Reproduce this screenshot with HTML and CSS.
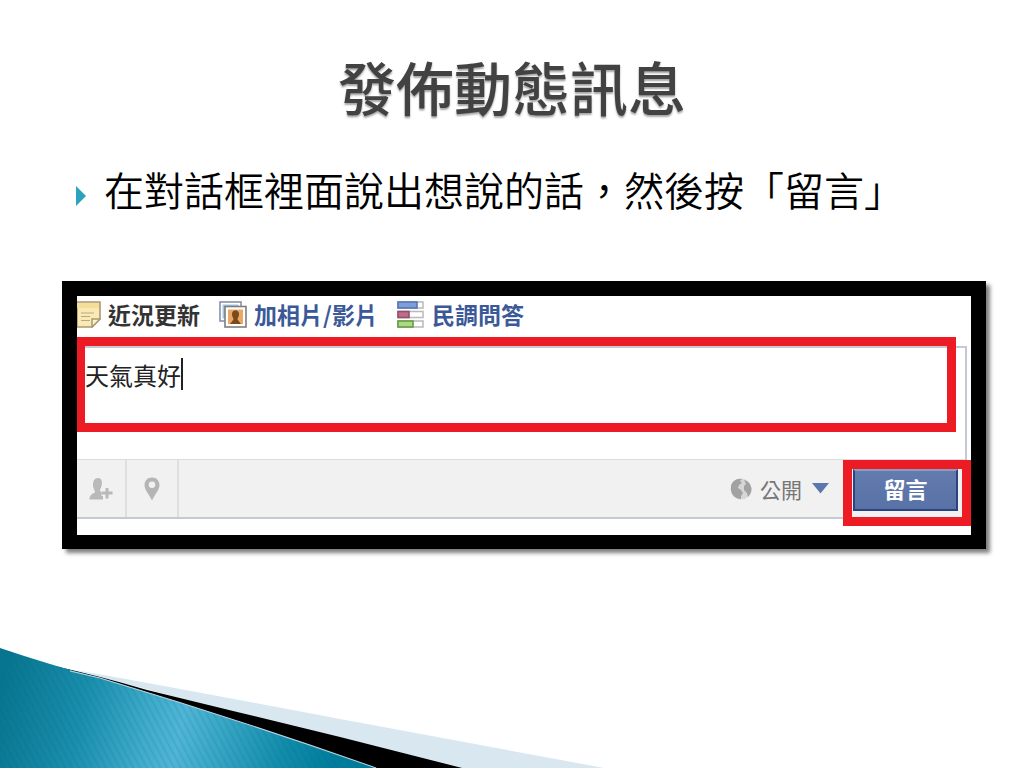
FILE: index.html
```html
<!DOCTYPE html>
<html lang="zh-Hant">
<head>
<meta charset="utf-8">
<meta name="viewport" content="width=device-width, initial-scale=1">
<title>發佈動態訊息</title>
<link rel="stylesheet" href="styles.css">
</head>
<body>
<main class="slide">
  <h1 class="title">發佈動態訊息</h1>
  <ul class="points">
    <li class="point">
      <svg class="marker" viewBox="0 0 10 20" aria-hidden="true"><path d="M0 0L10 10L0 20Z" fill="#2da2bf"/></svg>
      <span>在對話框裡面說出想說的話，然後按「留言」</span>
    </li>
  </ul>

  <section class="panel">
    <nav class="tabs">
      <a class="tab current" href="#status">
        <svg class="tab-icon note" viewBox="0 0 24 27" aria-hidden="true">
          <path d="M0 1H23V18L15 26H0Z" fill="#fbe9b4" stroke="#a89a72" stroke-width="1.6"/>
          <path d="M0 2H22V7H0Z" fill="#f7dd9c"/>
          <path d="M15 26V18H23Z" fill="#fff3c8" stroke="#a89a72" stroke-width="1.5"/>
          <path d="M4 12H17M4 15.500H13M4 19.500H13" stroke="#b5a98a" stroke-width="1.200"/>
        </svg>
        <span>近況更新</span>
      </a>
      <a class="tab" href="#photo">
        <svg class="tab-icon" viewBox="0 0 28 27" aria-hidden="true">
          <rect x="1" y="1" width="21" height="19" fill="#fff" stroke="#8492ac" stroke-width="1.6"/>
          <rect x="3.500" y="3.500" width="16" height="14" fill="#a9c4e8"/>
          <rect x="6" y="5.500" width="21" height="20.500" fill="#fff" stroke="#7d7d7d" stroke-width="1.6"/>
          <rect x="9" y="8.500" width="15" height="14.500" fill="#e9a867"/>
          <path d="M13 13C13 8 20 8 20 13C20 16 18.500 17 18.500 18.500L22 23H11L14.500 18.500C14.500 17 13 16 13 13Z" fill="#7a4a1c"/>
        </svg>
        <span>加相片/影片</span>
      </a>
      <a class="tab" href="#poll">
        <svg class="tab-icon" viewBox="0 0 28 27" aria-hidden="true">
          <g fill="#fff" stroke="#b9b9b9" stroke-width="1.5">
            <rect x="1" y="1" width="25" height="6"/><rect x="1" y="10.500" width="25" height="6"/><rect x="1" y="20" width="25" height="6"/>
          </g>
          <rect x="1" y="1" width="19" height="6" fill="#7c9fdb" stroke="#5a76b4" stroke-width="1.6"/>
          <rect x="1" y="10.500" width="11" height="6" fill="#c06a8c" stroke="#93506a" stroke-width="1.6"/>
          <rect x="1" y="20" width="15" height="6" fill="#a8dc7c" stroke="#669c48" stroke-width="1.6"/>
        </svg>
        <span>民調問答</span>
      </a>
    </nav>

    <form class="composer">
      <div class="message">
        <textarea class="message-text" rows="1" aria-label="近況內容">天氣真好</textarea>
        <span class="caret"></span>
      </div>
      <div class="toolbar">
        <button class="tool tag" type="button" aria-label="標註朋友">
          <svg width="24" height="24" viewBox="0 0 24 24" aria-hidden="true"><path d="M9 1C13 1 13.500 5 12.500 9C12 11 11 12 11 14L14 16V22.500H0.500C0.500 18 3 17 6 15.500C6 13 4 12 4 8C4 4 5.500 1 9 1Z" fill="#b9b9b9"/><path d="M18 10V22M12.500 16H24" stroke="#f1f1f1" stroke-width="6"/><path d="M18 11V21.500M12.500 16H23.500" stroke="#b9b9b9" stroke-width="3"/></svg>
        </button>
        <button class="tool place" type="button" aria-label="新增地點">
          <svg width="16" height="24" viewBox="0 0 16 24" aria-hidden="true"><path fill-rule="evenodd" d="M8 0.500C3.500 0.500 0.500 4 0.500 8C0.500 13 5 17 8 23.500C11 17 15.500 13 15.500 8C15.500 4 12.500 0.500 8 0.500ZM8 4.500A3.200 3.200 0 1 1 8 11A3.200 3.200 0 1 1 8 4.500Z" fill="#b5b5b5"/></svg>
        </button>
        <div class="privacy">
          <svg width="22" height="24" viewBox="0 0 22 24" aria-hidden="true"><circle cx="11" cy="12" r="10.500" fill="#d6d6d6"/><path d="M1 9C2 4 7 1 12 2L10 4L12 6L9 8L8 11L11 13L13 16L11 19L11 22C5 22 0 17 1 9Z" fill="#a2a2a2"/><path d="M14 3C18 4 21 7 21.500 12C21.500 15 20 18 18 20L17 16L14 13L14 9L16 7Z" fill="#a2a2a2"/></svg>
          <select class="privacy-select" aria-label="分享對象"><option>公開</option></select>
          <svg class="arrow" width="17" height="11" viewBox="0 0 17 11" aria-hidden="true"><path d="M0 0H17L8.500 10.500Z" fill="#5b78ae"/></svg>
        </div>
        <div class="submit-area"><button class="submit" type="button">留言</button></div>
      </div>
    </form>
  </section>

  <svg class="corner" viewBox="0 0 604 121" preserveAspectRatio="none" aria-hidden="true">
    <defs>
      <linearGradient id="sea" gradientUnits="userSpaceOnUse" x1="0" y1="50" x2="330" y2="130">
        <stop offset="0" stop-color="#087590"/><stop offset="0.250" stop-color="#1a8fad"/><stop offset="0.440" stop-color="#40abcb"/><stop offset="0.540" stop-color="#50b5d6"/><stop offset="0.660" stop-color="#38a6c5"/><stop offset="0.860" stop-color="#108aa9"/><stop offset="1" stop-color="#007d9c"/>
      </linearGradient>
      <pattern id="stripes" width="6" height="6" patternUnits="userSpaceOnUse" patternTransform="rotate(-28)"><rect width="2" height="6" fill="#00647e" opacity="0.120"/></pattern>
    </defs>
    <path d="M75 23Q150 36 340 72L604 121H440Z" fill="#d8e7f0"/>
    <path d="M54 19Q100 29 147 43L233 64L340 90L462 121H360L147 60Z" fill="#000"/>
    <path d="M0 1Q50 18 100 31Q240 73 376 121H0Z" fill="url(#sea)"/>
    <path d="M0 1Q50 18 100 31Q240 73 376 121H0Z" fill="url(#stripes)"/>
    <path d="M70 24L100 31Q240 73 376 121" fill="none" stroke="#b6d8e4" stroke-width="1"/>
  </svg>
</main>
</body>
</html>
```
FILE: styles.css
```css
* { box-sizing: border-box; }

body {
  margin: 0;
  background: #fff;
  font-family: "Noto Sans CJK TC", sans-serif;
}

.slide {
  position: relative;
  min-height: 100vh;
  padding: 44px 38px 0 62px;
  overflow: hidden;
}

.title {
  margin: 0 24px 0 0;
  font-size: 58px;
  line-height: 84px;
  font-weight: 500;
  text-align: center;
  color: #424242;
  text-shadow: 0 2px 2px rgba(0, 0, 0, 0.35);
}

.points {
  list-style: none;
  margin: 33px 0 0;
  padding: 0 0 0 14px;
}

.point {
  display: flex;
  align-items: center;
  gap: 18px;
  font-size: 40px;
  line-height: 56px;
  font-weight: 350;
  color: #000;
}

.marker {
  flex: none;
  width: 10px;
  height: 20px;
  margin-top: 14px;
}

.panel {
  margin-top: 64px;
  border: 15px solid #000;
  border-bottom-width: 14px;
  padding-bottom: 16px;
  background: #fff;
  box-shadow: 4px 4px 4px rgba(0, 0, 0, 0.5);
}

.tabs {
  display: flex;
  align-items: center;
  gap: 19px;
  height: 41px;
  padding-bottom: 5px;
}

.tab {
  display: flex;
  align-items: center;
  gap: 7px;
  font-size: 23px;
  line-height: 30px;
  font-weight: 700;
  color: #3b5998;
  text-decoration: none;
  white-space: nowrap;
}

.tab.current { color: #333; }

.tab-icon {
  flex: none;
  width: 28px;
  height: 27px;
}

.tab-icon.note { width: 24px; }

.composer {
  margin: 9px 4px 0 0;
  border: 2px solid #c5c9d4;
  border-left: 0;
}

.message {
  position: relative;
  margin: -11px 9px 27px 0;
  border: 9px solid #ed1c24;
  border-left-width: 8px;
  height: 95px;
  padding-top: 10px;
}

.message-text {
  display: block;
  width: 100%;
  height: 40px;
  padding: 1px 0;
  border: 0;
  outline: 0;
  resize: none;
  overflow: hidden;
  background: transparent;
  color: #222;
  font: 400 24px/36px "Noto Sans CJK TC", sans-serif;
}

.caret {
  position: absolute;
  left: 96px;
  top: 12px;
  width: 2px;
  height: 32px;
  background: #222;
}

.toolbar {
  display: flex;
  align-items: stretch;
  height: 58px;
  border-top: 1px solid #dcdcdc;
  background: #f1f1f1;
}

.tool {
  display: flex;
  align-items: center;
  justify-content: center;
  width: 52px;
  padding: 0;
  border: 0;
  border-right: 2px solid #dfdfdf;
  background: transparent;
}

.tool.tag { width: 50px; }

.privacy {
  display: flex;
  align-items: center;
  gap: 8px;
  margin-left: auto;
  padding-right: 14px;
}

.privacy-select {
  appearance: none;
  padding: 0;
  border: 0;
  background: transparent;
  color: #777;
  font: 400 21px/30px "Noto Sans CJK TC", sans-serif;
}

.arrow { margin-left: 2px; }

.submit-area {
  position: relative;
  width: 122px;
  padding: 9px 7px 7px 10px;
}

/* highlight frame drawn over the toolbar edges */
.submit-area::after {
  content: "";
  position: absolute;
  inset: 0 -6px -9px 0;
  border: 9px solid #ed1c24;
  pointer-events: none;
}

.submit {
  display: block;
  width: 100%;
  height: 42px;
  padding: 0 0 4px;
  border: 2px solid #29447e;
  border-top-color: #8a9cc2;
  background: linear-gradient(#637bad, #5872a7);
  color: #fff;
  font: 700 22px/34px "Noto Sans CJK TC", sans-serif;
}

.corner {
  position: absolute;
  left: 0;
  bottom: 0;
  width: 59%;
  height: 121px;
}
```
